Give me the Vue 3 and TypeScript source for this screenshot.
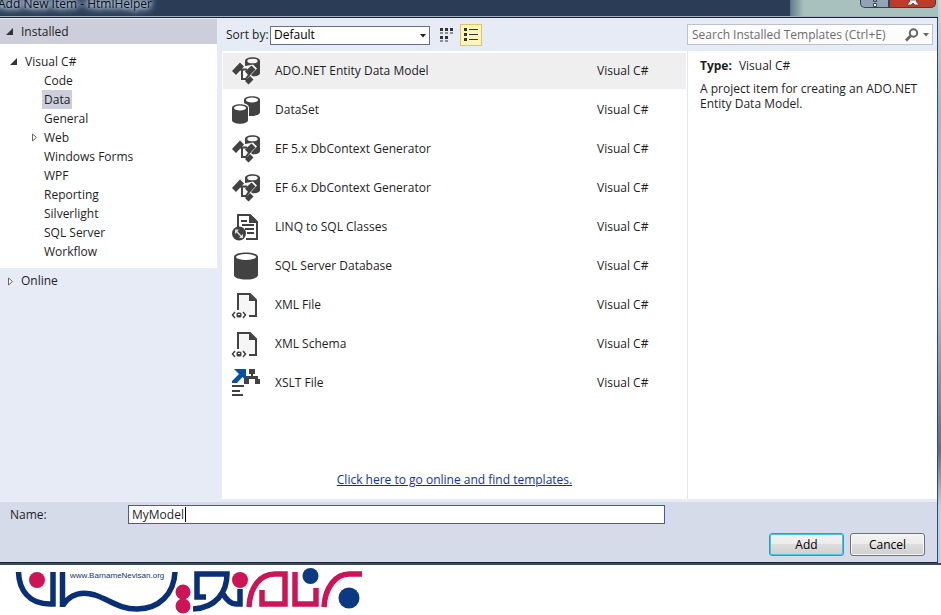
<script setup lang="ts">
import { ref } from 'vue'

type IconName = 'entity' | 'dataset' | 'linq' | 'database' | 'xml' | 'xslt'

interface Template {
  name: string
  icon: IconName
}

interface Category {
  name: string
  expandable?: boolean
}

const categories: Category[] = [
  { name: 'Code' },
  { name: 'Data' },
  { name: 'General' },
  { name: 'Web', expandable: true },
  { name: 'Windows Forms' },
  { name: 'WPF' },
  { name: 'Reporting' },
  { name: 'Silverlight' },
  { name: 'SQL Server' },
  { name: 'Workflow' },
]

const templates: Template[] = [
  { name: 'ADO.NET Entity Data Model', icon: 'entity' },
  { name: 'DataSet', icon: 'dataset' },
  { name: 'EF 5.x DbContext Generator', icon: 'entity' },
  { name: 'EF 6.x DbContext Generator', icon: 'entity' },
  { name: 'LINQ to SQL Classes', icon: 'linq' },
  { name: 'SQL Server Database', icon: 'database' },
  { name: 'XML File', icon: 'xml' },
  { name: 'XML Schema', icon: 'xml' },
  { name: 'XSLT File', icon: 'xslt' },
]

const activeCategory = ref('Data')
const activeTemplate = ref('ADO.NET Entity Data Model')
const sortBy = ref('Default')
const search = ref('')
const fileName = ref('MyModel')
</script>

<template>
  <div class="page">
    <div class="window">
      <header class="titlebar">
        <h1>Add New Item - HtmlHelper</h1>
        <div class="backdrop"></div>
        <div class="caption">
          <button type="button" class="help" aria-label="Help">
            <svg width="8" height="8" viewBox="0 0 8 8"><path d="M2.500 0H5.500V1.500H2.500ZM2.500 3.500H5.500V6.500H2.500Z" fill="#fff" stroke="#3c465a" /></svg>
          </button>
          <button type="button" class="close" aria-label="Close">
            <svg width="12" height="6" viewBox="0 0 12 6"><path d="M0 5L3 1L2 0H10L9 1L12 5H8L6 3L4 5Z" fill="#fff" stroke="#5b2622" stroke-width=".7" /></svg>
          </button>
        </div>
      </header>

      <div class="body">
        <nav class="sidebar">
          <button type="button" class="group head">
            <svg class="tri" width="8" height="8" viewBox="0 0 8 8"><path d="M7 0V7H0Z" fill="#333" /></svg>Installed
          </button>
          <div class="tree">
            <button type="button" class="root">
              <svg class="tri" width="8" height="8" viewBox="0 0 8 8"><path d="M7 0V7H0Z" fill="#333" /></svg>Visual C#
            </button>
            <ul>
              <li v-for="c in categories" :key="c.name">
                <svg v-if="c.expandable" class="expander" width="6" height="9" viewBox="0 0 6 9"><path d="M.5 1L4.500 4.500L.5 8Z" fill="#fff" stroke="#666" /></svg>
                <button type="button" :class="{ active: c.name === activeCategory }" @click="activeCategory = c.name">{{ c.name }}</button>
              </li>
            </ul>
          </div>
          <button type="button" class="group">
            <svg class="tri" width="8" height="9" viewBox="0 0 8 9"><path d="M2.500 1L6.500 4.500L2.500 8Z" fill="#fff" stroke="#666" /></svg>Online
          </button>
        </nav>

        <main class="main">
          <div class="toolbar">
            <label for="sort">Sort by:</label>
            <div class="select">
              <select id="sort" v-model="sortBy">
                <option>Default</option>
                <option>Name Ascending</option>
                <option>Name Descending</option>
              </select>
              <svg width="6" height="4" viewBox="0 0 6 4"><path d="M0 0H6L3 3.500Z" fill="#222" /></svg>
            </div>
            <button type="button" class="view" aria-label="Small icons">
              <svg width="14" height="14" viewBox="0 0 14 14" fill="#333"><path d="M0 0h3v3H0zM5 0h3v3H5zM10 0h3v3h-3zM0 8h3v3H0zM5 8h3v3H5zM0 4.500h3v1H0zM5 4.500h3v1H5zM10 4.500h3v1h-3zM0 12.500h3v1H0zM5 12.500h3v1H5z" /></svg>
            </button>
            <button type="button" class="view on" aria-label="List">
              <svg width="14" height="14" viewBox="0 0 14 14" fill="#333"><path d="M0 0h3v3H0zM0 5h3v3H0zM0 10h3v3H0zM5 1h9v1H5zM5 6h9v1H5zM5 11h9v1H5z" /></svg>
            </button>
          </div>

          <div class="search">
            <input v-model="search" type="text" aria-label="Search Installed Templates" placeholder="Search Installed Templates (Ctrl+E)" />
            <svg width="14" height="14" viewBox="0 0 14 14" fill="none" stroke="#666"><circle cx="8.500" cy="5" r="3.700" stroke-width="2" /><path d="M5.500 8L1 12.500" stroke-width="2.800" /></svg>
            <svg width="6" height="4" viewBox="0 0 6 4"><path d="M0 0H6L3 3.500Z" fill="#666" /></svg>
          </div>

          <section class="list">
            <ul>
              <li v-for="t in templates" :key="t.name">
                <button type="button" :class="{ active: t.name === activeTemplate }" @click="activeTemplate = t.name">
                  <svg width="30" height="30" viewBox="0 0 30 30" fill="#424242">
                    <template v-if="t.icon === 'entity'">
                      <path d="M14 5C14 0 29 0 29 5V17C29 19.500 25 20.500 21 20.500H14Z" />
                      <ellipse cx="21.500" cy="5" rx="5.200" ry="2.300" fill="#f6f6f6" />
                      <path d="M0 15.500L9.500 5L14.500 10L19.500 9L22 8.500L26 12.500L20 19L23.500 22L17.500 29L13 25H9.500V16L5 20.500Z" fill="#f6f6f6" />
                      <path d="M1 15L9 6.500L13 10.500L5 19ZM14 15.500L20.500 9.500L24.500 13.500L18 20ZM14 25L19 20L22.500 23.500L17.500 28.500Z" />
                      <path d="M9 13.500H16M11 13.500V23H16M15 23L20 16" fill="none" stroke="#424242" stroke-width="2" />
                    </template>
                    <template v-else-if="t.icon === 'dataset'">
                      <path d="M13 5C13 0 29 0 29 5V17C29 20 24 21 20 21H13Z" />
                      <ellipse cx="21" cy="5" rx="6" ry="2.500" fill="#fff" />
                      <path d="M0 13C0 6 18 6 18 13V29H0Z" fill="#fff" />
                      <path d="M1 13C1 8 17 8 17 13V25C17 30 1 30 1 25Z" />
                      <ellipse cx="9" cy="13" rx="6" ry="2.500" fill="#fff" />
                    </template>
                    <template v-else-if="t.icon === 'linq'">
                      <path d="M7 15V3H19L26 10V27H15" fill="none" stroke="#424242" stroke-width="2" />
                      <path d="M18 3V11H26V9L20 3ZM10 8H16V10H10ZM11 12H23V14H11ZM14 16H23V18H14ZM16 20H23V22H16Z" />
                      <circle cx="8" cy="21.500" r="7" />
                      <path d="M4 17.500H8L6.500 19.500L10.500 23.500L12 22V26H8L9.500 24.500L5.500 20.500L4 22Z" fill="#ddd" />
                    </template>
                    <template v-else-if="t.icon === 'database'">
                      <path d="M3 6C3 0 27 0 27 6V24C27 30 3 30 3 24Z" />
                      <ellipse cx="15" cy="6" rx="10" ry="3" fill="#fff" />
                    </template>
                    <template v-else-if="t.icon === 'xml'">
                      <path d="M7 20V4H19L25 10V26H18" fill="#f6f6f6" stroke="#424242" stroke-width="2" />
                      <path d="M18 4V11H25Z" />
                      <path d="M4 22L1.500 25L4 28M12 22L14.500 25L12 28" fill="none" stroke="#424242" stroke-width="1.500" />
                      <rect x="5.500" y="22.500" width="5" height="5" rx="1.500" /><path d="M7 24H9V25H7Z" fill="#fff" />
                    </template>
                    <template v-else>
                      <path d="M3 1H15V13L11.500 9L6 15H1V13L8 6Z" fill="#0a50a0" />
                      <path d="M18 1H24V6H22V8H27V11H29V16H24V11H18V16H13V11H15V8H20V6H18ZM1 17H13V19H1ZM1 22H9V24H1ZM1 26H12V28H1Z" />
                    </template>
                  </svg>
                  <span>{{ t.name }}</span>
                  <span>Visual C#</span>
                </button>
              </li>
            </ul>
            <a href="#online">Click here to go online and find templates.</a>
          </section>

          <aside class="details">
            <p><strong>Type:</strong>Visual C#</p>
            <p>A project item for creating an ADO.NET Entity Data Model.</p>
          </aside>
        </main>
      </div>

      <footer class="footer">
        <div class="name-row">
          <label for="file-name">Name:</label>
          <div class="name-box">
            <input id="file-name" v-model="fileName" type="text" />
            <span class="caret"></span>
          </div>
        </div>
        <div class="actions">
          <button type="button" class="primary">Add</button>
          <button type="button">Cancel</button>
        </div>
      </footer>
    </div>

    <svg class="logo" width="380" height="50" viewBox="0 565 380 50" fill="none" stroke-width="5.500" role="img" aria-label="BarnameNevisan">
      <g stroke="#0b2f74">
        <path d="M18.500 572C19 590 29 604 50 604H53V572" />
        <path d="M62.500 572V607M63 605C70 594 82 591 95 595C110 600 119 609 137 609C159 609 174 594 175 572" />
        <path d="M206 597H197V574H227C227 592 216 608 193 609M223 594Q229 604 236 604H240V589" />
      </g>
      <g stroke="#cc1457">
        <path d="M249 607C250 587 260 574 275 574H285V604H262V590" />
        <path d="M295 572V604H316V588M324 607C325 587 336 574 349 574H362" />
      </g>
      <g fill="#cc1457">
        <circle cx="37" cy="580" r="8" /><circle cx="183" cy="592" r="7.500" /><circle cx="183" cy="606" r="7.500" /><circle cx="240" cy="580" r="8" />
      </g>
      <g fill="#0b3a82">
        <circle cx="310.500" cy="576" r="8" /><circle cx="349" cy="598" r="10.500" />
      </g>
      <text x="70" y="578" fill="#20356f">www.BarnameNevisan.org</text>
    </svg>
  </div>
</template>

<style>
body {
  margin: 0;
  background: #fff;
}
</style>

<style scoped>
* {
  box-sizing: border-box;
}
.page {
  min-height: 100vh;
  display: flex;
  flex-direction: column;
  overflow: hidden;
  font: 12px/16px "Open Sans", "Noto Sans", sans-serif;
  color: #1e1e1e;
}
button, input, select {
  font: inherit;
  color: inherit;
}
button {
  padding: 0;
  border: 0;
  background: none;
  text-align: left;
}
ul {
  list-style: none;
  margin: 0;
  padding: 0;
}
p {
  margin: 0;
}
svg {
  display: block;
  flex: none;
}
.window {
  flex: 1;
  display: flex;
  flex-direction: column;
  padding-right: 3px;
  background: linear-gradient(#c3dcd7, #9db9d8 20%, #aecbe8 50%, #4f7297 80%, #b5d2ef 90%);
  border-bottom: 2px solid #3b4a5e;
}
.titlebar {
  display: flex;
  height: 18px;
  overflow: hidden;
  background: #2a3c56;
  border-bottom: 1px solid #182436;
  box-shadow: inset 0 -1px #a5b0bf;
}
.titlebar h1 {
  flex: 1;
  margin: -5px 0 0 -2px;
  font: inherit;
  line-height: 17px;
  color: #0c111b;
  text-shadow: 0 0 4px #b9c8da, 0 0 5px #b9c8da, 0 0 6px #b9c8da, 0 0 8px #b9c8da, 0 0 12px #b9c8da;
}
.backdrop {
  width: 70px;
  height: 16px;
  background: linear-gradient(90deg, #5f7885, #a9c1bd 20%);
}
.caption {
  display: flex;
  width: 78px;
  height: 16px;
  padding: 0 2px 0 0;
  background: #a9c1bd;
}
.caption button {
  display: flex;
  justify-content: center;
  height: 8px;
  border: 1px solid #34405a;
  border-top: 0;
}
.caption .help {
  width: 29px;
  border-radius: 0 0 0 5px;
  background: #92a3b3;
}
.caption .close {
  flex: 1;
  border-radius: 0 0 5px 0;
  background: #c03b25;
}
.body {
  flex: 1;
  display: flex;
  background: #e6ebf5;
  border-right: 1px solid #34496a;
  padding-bottom: 3px;
}
.sidebar {
  width: 217px;
  padding-top: 1px;
}
.group {
  display: flex;
  align-items: center;
  width: 100%;
  height: 26px;
  padding-left: 6px;
}
.group .tri {
  margin-right: 7px;
}
.head {
  height: 25px;
  background: #cccedb;
}
.head + .tree {
  height: 224px;
}
.tree {
  padding-top: 9px;
  background: #fff;
}
.root {
  display: flex;
  align-items: center;
  height: 18px;
  padding-left: 10px;
}
.root .tri {
  margin-right: 7px;
}
.tree li {
  display: flex;
  align-items: center;
  height: 19px;
  padding-left: 42px;
}
.tree li button {
  height: 19px;
  padding: 0 2px;
}
.tree li .active {
  background: #cccedb;
}
.expander {
  margin: 0 4px 0 -10px;
}
.main {
  flex: 1;
  display: grid;
  grid-template: 33px 1fr / 1fr 250px;
  padding-left: 5px;
}
.toolbar {
  display: flex;
  align-items: center;
  padding: 1px 0 0 4px;
}
.toolbar label {
  width: 44px;
  white-space: nowrap;
}
.select {
  position: relative;
  width: 160px;
}
.select select {
  display: block;
  width: 100%;
  height: 19px;
  padding: 0 3px;
  border: 1px solid #65718a;
  border-radius: 0;
  background: #fff;
  color: #000;
  appearance: none;
}
.select svg {
  position: absolute;
  right: 4px;
  top: 8px;
}
.view {
  display: flex;
  align-items: center;
  justify-content: center;
  width: 22px;
  height: 22px;
  margin-left: 6px;
}
.view.on {
  margin-left: 2px;
  border: 1px solid #e5c365;
  background: #fdf4bf;
}
.search {
  align-self: center;
  display: flex;
  align-items: center;
  gap: 4px;
  height: 21px;
  margin-right: 4px;
  padding-right: 3px;
  border: 1px solid #bcc1cc;
  background: #fcfcfd;
}
.search input {
  flex: 1;
  min-width: 0;
  height: 19px;
  padding: 0 4px;
  border: 0;
  outline: 0;
  background: none;
}
.search input::placeholder {
  color: #6d6d6d;
  opacity: 1;
}
.list {
  display: flex;
  flex-direction: column;
  justify-content: space-between;
  padding: 2px 1px 11px;
  background: #fff;
}
.list ul {
  display: flex;
  flex-direction: column;
  gap: 3px;
}
.list li button {
  display: grid;
  grid-template-columns: 30px 1fr 89px;
  column-gap: 14px;
  align-items: center;
  width: 100%;
  height: 36px;
  padding-left: 8px;
}
.list li .active {
  background: #efeff0;
}
.list a {
  align-self: center;
  color: #0e2fb5;
}
.details {
  display: flex;
  flex-direction: column;
  gap: 8px;
  padding: 7px 16px 0 12px;
  border-left: 1px solid #e3e6ee;
  background: #fff;
  line-height: 15px;
}
.details strong {
  margin-right: 7px;
}
.footer {
  display: flex;
  flex-direction: column;
  gap: 9px;
  height: 61px;
  padding: 3px 12px 0 10px;
  background: #d6dbe9;
  border-right: 1px solid #34496a;
  border-bottom: 1px solid #1c2735;
}
.name-row {
  display: flex;
  align-items: center;
}
.name-row label {
  width: 118px;
}
.name-box {
  position: relative;
  width: 537px;
}
.name-box input {
  display: block;
  width: 100%;
  height: 19px;
  padding: 0 3px;
  border: 1px solid #4455c5;
  outline: 0;
  background: #fff;
}
.caret {
  position: absolute;
  left: 57px;
  top: 2px;
  width: 1px;
  height: 15px;
  background: #000;
}
.actions {
  display: flex;
  justify-content: flex-end;
  gap: 6px;
}
.actions button {
  width: 75px;
  height: 23px;
  border: 1px solid #707070;
  border-radius: 3px;
  background: linear-gradient(#f3f3f3, #ebebeb 50%, #dddddd 50%, #cfcfcf);
  box-shadow: inset 0 0 0 1px #f8f8f8;
  color: #000;
  text-align: center;
}
.actions .primary {
  border-color: #3399b5;
  box-shadow: inset 0 0 0 1px #45c8e8;
}
.logo {
  max-width: 100%;
}
.logo text {
  font: 8px "Liberation Sans", sans-serif;
}
</style>
